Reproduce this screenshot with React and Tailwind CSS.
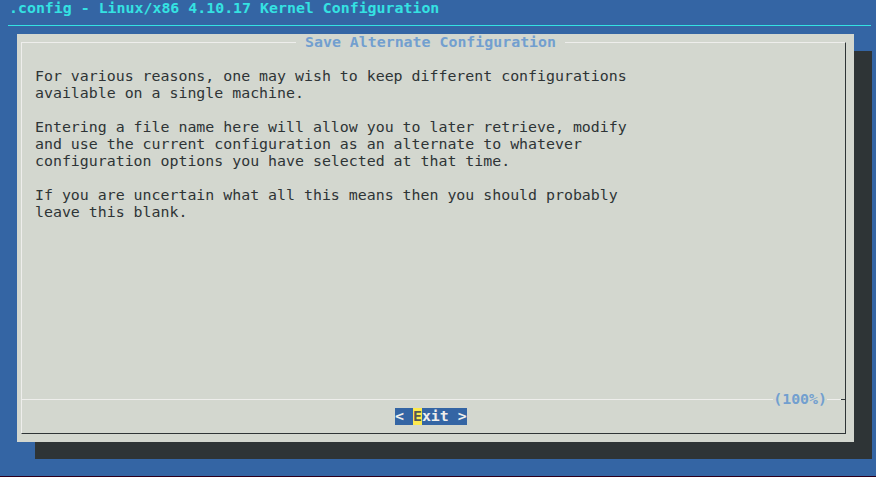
import React from 'react';

const mono = { fontFamily: '"DejaVu Sans Mono", "Liberation Mono", monospace' };

const paragraphs = [
  ['For various reasons, one may wish to keep different configurations', 'available on a single machine.'],
  [
    'Entering a file name here will allow you to later retrieve, modify',
    'and use the current configuration as an alternate to whatever',
    'configuration options you have selected at that time.',
  ],
  ['If you are uncertain what all this means then you should probably', 'leave this blank.'],
];

export default function App() {
  return (
    <div
      className="relative w-[876px] h-[477px] overflow-hidden bg-[#3465a4] text-[14.9px] leading-[17px]"
      style={mono}
    >
      {/* top title row */}
      <div className="h-[17px] pl-[9px] font-bold text-[#34e2e2] whitespace-pre">
        .config - Linux/x86 4.10.17 Kernel Configuration
      </div>
      <div className="mt-[8px] ml-[8px] w-[863px] h-px bg-[#34e2e2]" />

      {/* dialog */}
      <div className="mt-[8px] ml-[17px] w-[837px] h-[408px] bg-[#d3d7cf] shadow-[18px_17px_0_#2e3436] pt-[8px] pl-[4px]">
        <div className="relative w-[825px] h-[392px] border-t border-l border-t-[#eeeeec] border-l-[#eeeeec] border-r border-b border-r-[#2e3436] border-b-[#2e3436] flex flex-col">
          <div className="absolute -top-[9px] left-[274px] px-[9px] bg-[#d3d7cf] font-bold text-[#729fcf] whitespace-pre">
            Save Alternate Configuration
          </div>

          <div className="h-[356px] pt-[25px] pl-[13px] text-[#2e3436] whitespace-pre flex flex-col gap-[17px]">
            {paragraphs.map((lines, i) => (
              <div key={i}>
                {lines.map((l, j) => (
                  <div key={j}>{l}</div>
                ))}
              </div>
            ))}
          </div>

          {/* separator */}
          <div className="relative h-px bg-[#eeeeec]">
            <div className="absolute -top-[8px] right-[18px] bg-[#d3d7cf] font-bold text-[#729fcf] whitespace-pre">
              (100%)
            </div>
            <div className="absolute top-0 right-0 w-[4px] h-px bg-[#2e3436]" />
          </div>

          <div className="pt-[8px] pl-[373px]">
            <div className="inline-flex h-[17px] bg-[#3465a4] font-bold text-[#eeeeec] whitespace-pre">
              <span>{'< '}</span>
              <span className="bg-[#fce94f] text-[#555753]">E</span>
              <span>{'xit >'}</span>
            </div>
          </div>
        </div>
      </div>

      <div className="absolute left-0 bottom-0 w-full h-px bg-[#2c001e]" />
    </div>
  );
}
